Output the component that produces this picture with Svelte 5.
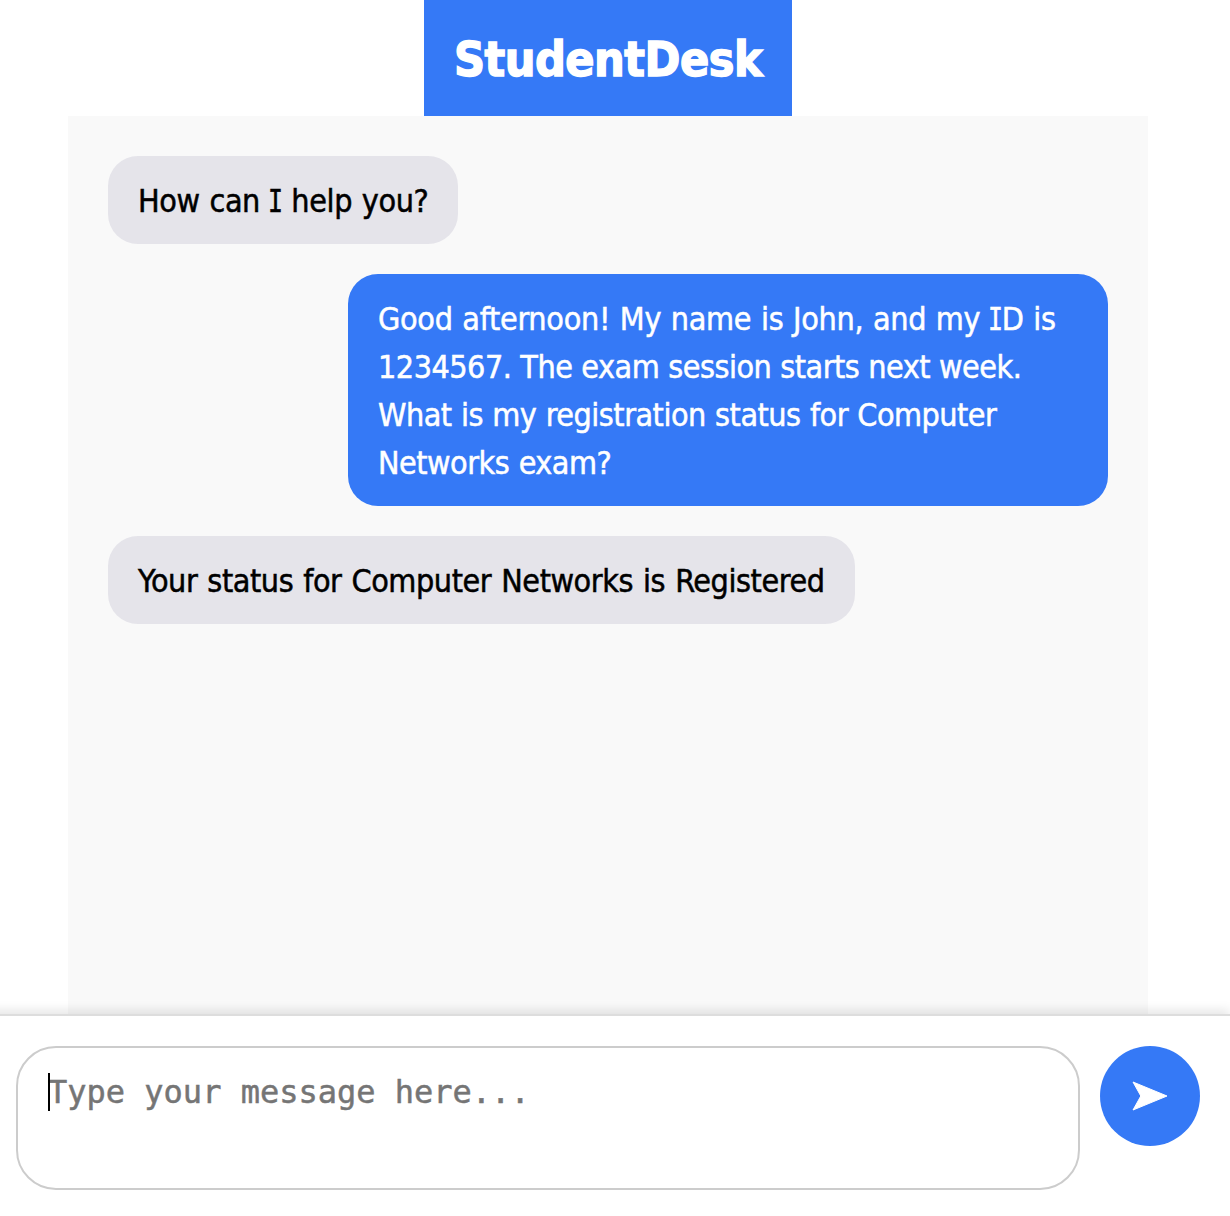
<script>
  const messages = [
    { from: 'bot', lines: [{ text: 'How can I help you?', fit: 'fit-a' }] },
    {
      from: 'user',
      lines: [
        { text: 'Good afternoon! My name is John, and my ID is', fit: 'fit-b' },
        { text: '1234567. The exam session starts next week.', fit: 'fit-c' },
        { text: 'What is my registration status for Computer', fit: 'fit-d' },
        { text: 'Networks exam?', fit: 'fit-e' },
      ],
    },
    { from: 'bot', lines: [{ text: 'Your status for Computer Networks is Registered', fit: 'fit-f' }] },
  ];

  let draft = $state('');

  // Capital I is set with serifs, the rest is plain sans.
  const split = (text) => text.split(/(I)/);
</script>

<div class="page">
  <header><h1>StudentDesk</h1></header>
  <main>
    {#each messages as message}
      <div class="bubble {message.from}">
        {#each message.lines as line}
          <div class="line {line.fit}">{#each split(line.text) as part}{#if part === 'I'}<span class="cap-i">I</span>{:else}{part}{/if}{/each}</div>
        {/each}
      </div>
    {/each}
  </main>
  <footer>
    <div class="field">
      <span class="caret"></span>
      <textarea placeholder="Type your message here..." bind:value={draft}></textarea>
    </div>
    <button aria-label="Send">
      <svg width="36" height="30" viewBox="0 0 36 30"><path d="M1 1 L35 15 L1 29 L8.8 15 Z" fill="#fff" stroke="#fff" stroke-width="1" stroke-linejoin="round" /></svg>
    </button>
  </footer>
</div>

<style>
  :global(body) { margin: 0; background: #fff; }
  .page {
    width: 1230px;
    height: 1216px;
    display: flex;
    flex-direction: column;
    overflow: hidden;
    font-family: Tahoma, 'DejaVu Sans Condensed', 'DejaVu Sans', sans-serif;
    font-stretch: condensed;
  }
  header {
    width: 368px;
    height: 116px;
    flex: none;
    box-sizing: border-box;
    padding-top: 1px;
    margin-left: 424px;
    background: #3579f6;
    display: flex;
    align-items: center;
    justify-content: center;
  }
  h1 {
    margin: 0;
    color: #fff;
    font-size: 48px;
    line-height: 58px;
    font-weight: 700;
    letter-spacing: -0.5px;
    -webkit-text-stroke: 1.4px #fff;
    white-space: nowrap;
  }
  main {
    width: 1080px;
    box-sizing: border-box;
    flex: 1;
    margin-left: 68px;
    padding: 40px;
    background: #f9f9f9;
    display: flex;
    flex-direction: column;
    align-items: flex-start;
    gap: 30px;
  }
  .bubble {
    box-sizing: border-box;
    padding: 21px 30px 19px;
    border-radius: 30px;
    font-size: 32px;
    line-height: 48px;
    -webkit-text-stroke: 0.5px currentColor;
  }
  .bot { background: #e5e4ea; color: #000; }
  .user { width: 760px; align-self: flex-end; background: #3579f6; color: #fff; }
  .line { height: 48px; white-space: pre; }
  .fit-a { width: 290px; letter-spacing: -0.4px; word-spacing: 1.1px; }
  .fit-b { letter-spacing: -0.28px; word-spacing: 0.75px; }
  .fit-c { letter-spacing: -0.5px; word-spacing: 0.35px; }
  .fit-d { letter-spacing: -0.5px; word-spacing: 0.7px; }
  .fit-e { letter-spacing: -0.5px; word-spacing: 0.8px; }
  .fit-f { width: 687px; letter-spacing: -0.42px; word-spacing: 1.25px; }
  .cap-i {
    display: inline-block;
    line-height: 1;
    margin: 0 -3.6px;
    font-family: 'DejaVu Sans Mono', monospace;
    transform: scaleX(0.78);
  }
  footer {
    height: 170px;
    flex: none;
    margin-left: -20px;
    padding: 30px 30px 0 36px;
    border-top: 2px solid #ddd;
    background: #fff;
    box-shadow: 0 -4px 10px rgba(0, 0, 0, 0.1);
    display: flex;
    align-items: flex-start;
    gap: 20px;
    position: relative;
  }
  .field { position: relative; width: 1064px; height: 144px; }
  textarea {
    display: block;
    box-sizing: border-box;
    width: 100%;
    height: 100%;
    margin: 0;
    padding: 25px 30px;
    border: 2px solid #ccc;
    border-radius: 40px;
    outline: 0;
    resize: none;
    overflow: hidden;
    background: #fff;
    font: 32px/38px 'DejaVu Sans Mono', monospace;
  }
  textarea::placeholder { color: #757575; opacity: 1; -webkit-text-stroke: 0.5px #757575; }
  .caret { position: absolute; left: 32px; top: 27px; width: 2px; height: 38px; background: #000; }
  button {
    width: 100px;
    height: 100px;
    padding: 0;
    border: 0;
    border-radius: 50%;
    background: #3579f6;
    display: flex;
    align-items: center;
    justify-content: center;
  }
</style>
